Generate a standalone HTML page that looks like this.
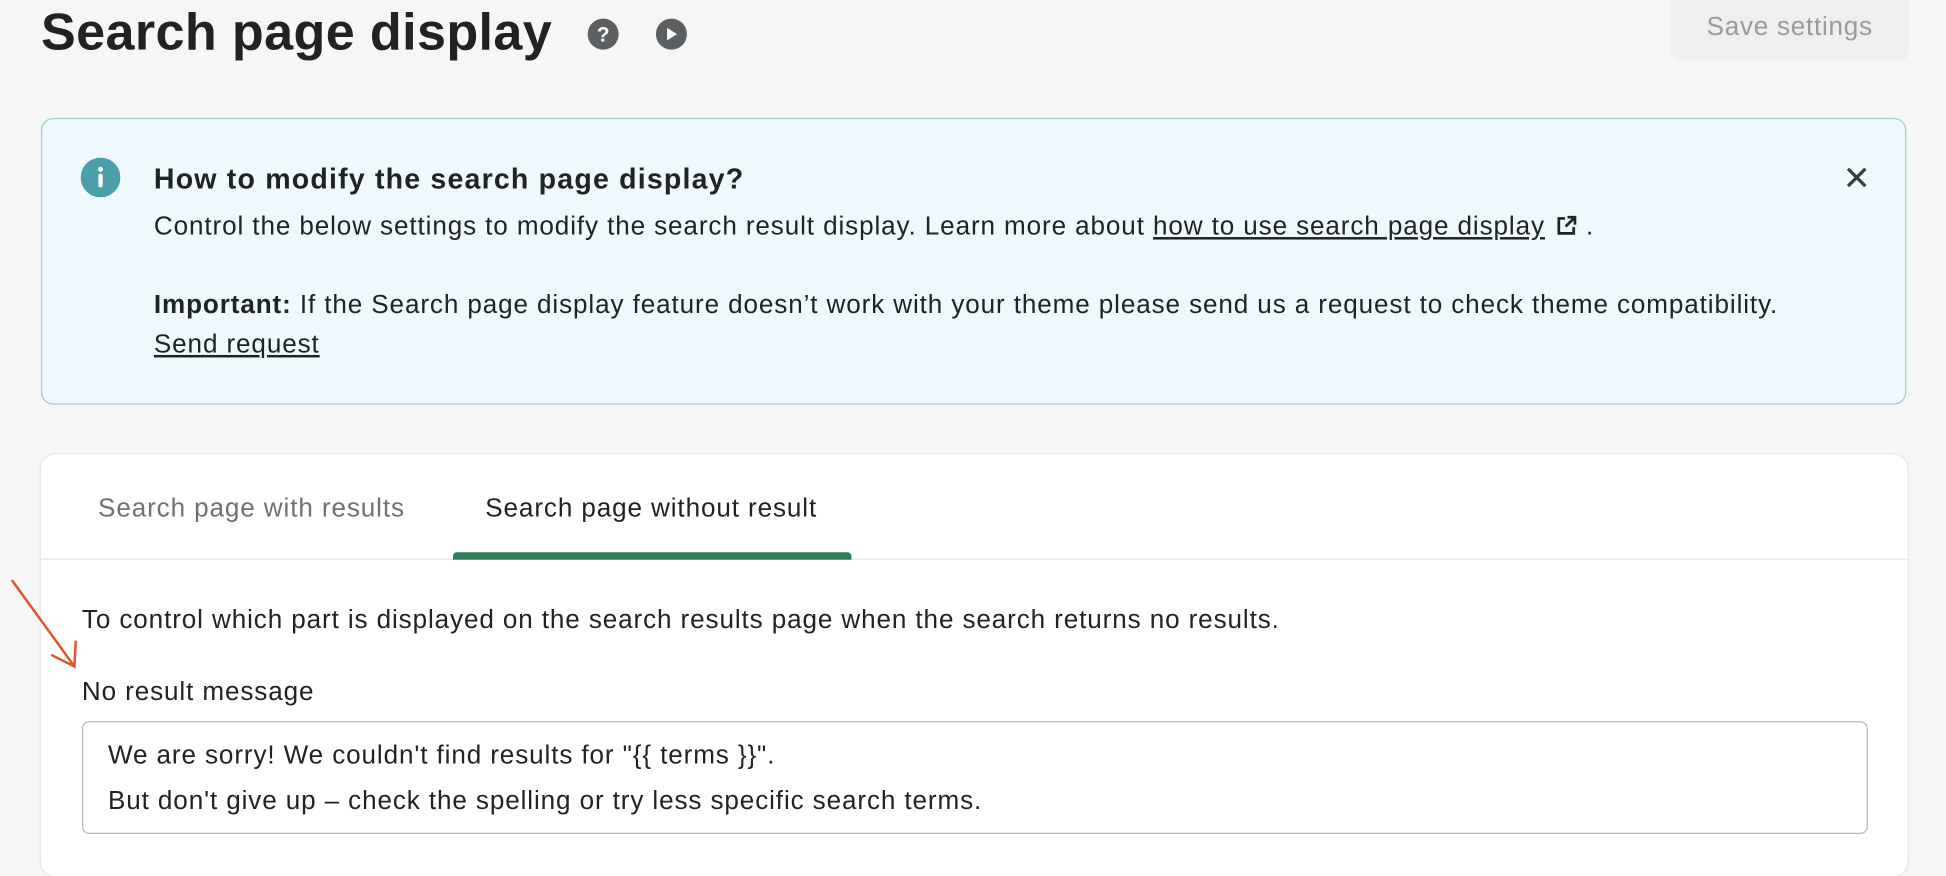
<!DOCTYPE html>
<html><head><meta charset="utf-8">
<style>
html,body{margin:0;padding:0;background:#f6f6f6;overflow:hidden;width:1946px;height:854px}
#w{position:absolute;left:0;top:0;width:1568px;height:688px;transform:scale(1.2411);transform-origin:0 0;font-family:"Liberation Sans",sans-serif;color:#202223}
.a{position:absolute;white-space:nowrap}
.t{font-size:21px;letter-spacing:0.72px}
</style></head><body><div id="w">
<div class="a" style="left:33px;top:2px;font-size:42px;font-weight:600;letter-spacing:0.3px">Search page display</div>
<svg class="a" style="left:473px;top:14px" width="82" height="27" viewBox="0 0 82 27">
<circle cx="13" cy="13.5" r="12.5" fill="#5c5f62"/><text x="13" y="19.5" font-size="17" font-weight="bold" fill="#fff" text-anchor="middle" font-family="Liberation Sans">?</text>
<circle cx="68" cy="13.5" r="12.5" fill="#5c5f62"/><path d="M64.5 8.5 L72.5 13.5 L64.5 18.5Z" fill="#fff"/>
</svg>
<div class="a" style="left:1346px;top:-10px;width:192px;height:59px;background:#efefef;border-radius:8px;color:#9a9a9a;font-size:21px;letter-spacing:0.6px;text-align:center;line-height:64px">Save settings</div>

<div class="a" style="left:33px;top:95px;width:1501px;height:229px;background:#eef8fd;border:1.5px solid #a3c9d2;border-radius:10px"></div>
<svg class="a" style="left:65px;top:127px" width="32" height="32"><circle cx="16" cy="16" r="16" fill="#4a9faa"/><circle cx="16" cy="9.5" r="2" fill="#fff"/><rect x="14.3" y="13" width="3.4" height="11" rx="1.5" fill="#fff"/></svg>
<div class="a" style="left:124px;top:131px;font-size:23px;font-weight:600;letter-spacing:0.95px">How to modify the search page display?</div>
<div class="a t" style="left:124px;top:171px">Control the below settings to modify the search result display. Learn more about <span style="text-decoration:underline">how to use search page display</span> <svg width="18" height="18" viewBox="0 0 18 18" style="vertical-align:-2px;margin-left:2px"><path d="M8 3H3v12h12v-5" fill="none" stroke="#202223" stroke-width="2.2"/><path d="M10 2h6v6M16 2L8.5 9.5" fill="none" stroke="#202223" stroke-width="2.2"/></svg> .</div>
<div class="a t" style="left:124px;top:234px"><b style="font-weight:600">Important:</b> If the Search page display feature doesn’t work with your theme please send us a request to check theme compatibility.</div>
<div class="a t" style="left:124px;top:266px;text-decoration:underline">Send request</div>
<svg class="a" style="left:1487px;top:134px" width="18" height="18"><path d="M2 2L16 16M16 2L2 16" stroke="#3a3c3e" stroke-width="2.6"/></svg>

<div class="a" style="left:33px;top:366px;width:1504px;height:340px;background:#fff;border-radius:12px;box-shadow:0 0 2px rgba(0,0,0,.12)"></div>
<div class="a" style="left:33px;top:450px;width:1504px;height:1px;background:#e1e3e5"></div>
<div class="a t" style="left:79px;top:398px;color:#6d7175">Search page with results</div>
<div class="a t" style="left:391px;top:398px">Search page without result</div>
<div class="a" style="left:365px;top:445px;width:321px;height:6px;background:#2e7d5b;border-radius:3px 3px 0 0"></div>
<div class="a t" style="left:66px;top:488px">To control which part is displayed on the search results page when the search returns no results.</div>
<div class="a t" style="left:66px;top:546px">No result message</div>
<div class="a" style="left:66px;top:581px;width:1437px;height:89px;border:1.5px solid #b5b8bb;border-radius:6px;background:#fff"></div>
<div class="a t" style="left:87px;top:597px">We are sorry! We couldn't find results for "{{ terms }}".</div>
<div class="a t" style="left:87px;top:634px">But don't give up – check the spelling or try less specific search terms.</div>
<svg class="a" style="left:0;top:460px" width="80" height="90"><path d="M10 8L60 77M42 68L60 77L61 57" fill="none" stroke="#e0532e" stroke-width="2" stroke-linecap="round"/></svg>
</div></body></html>
